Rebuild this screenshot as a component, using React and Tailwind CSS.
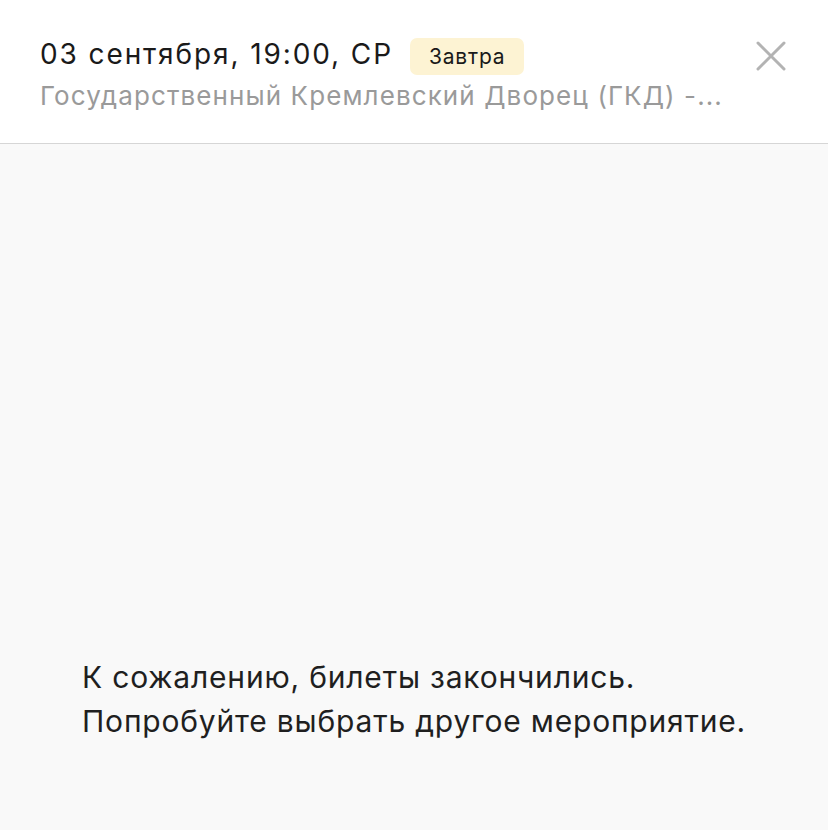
export default function App() {
  return (
    <div className="w-[828px] h-[830px] flex flex-col bg-[#f9f9f9]" style={{ fontFamily: "Inter, 'Noto Sans', sans-serif" }}>
      <div className="h-[144px] bg-white border-b border-[#d6d6d6] flex items-start justify-between pl-[40px] pr-[40px] pt-[33px]">
        <div className="flex flex-col min-w-0">
          <div className="flex items-center gap-[17px]">
            <span className="text-[28px] leading-[38px] text-[#1a1a1a] tracking-[1.9px]">03 сентября, 19:00, СР</span>
            <span className="mt-[5px] bg-[#fdf3d3] rounded-[7px] px-[19px] h-[37px] flex items-center text-[21px] text-[#1a1a1a] tracking-[0.8px]">Завтра</span>
          </div>
          <div className="mt-[4px] whitespace-nowrap text-[26px] leading-[34px] text-[#9a9a9a] tracking-[1.1px]">
            Государственный Кремлевский Дворец (ГКД) -...
          </div>
        </div>
        <svg width="32" height="32" viewBox="0 0 32 32" className="mt-[7px] mr-[1px]">
          <path d="M3 3 L29 29 M29 3 L3 29" stroke="#b3b3b3" strokeWidth="3" strokeLinecap="round" />
        </svg>
      </div>
      <div className="flex-1 flex flex-col justify-end pb-[87px] pl-[82px]">
        <p className="text-[30px] leading-[44px] text-[#1f1f1f] tracking-[0.8px]">
          К сожалению, билеты закончились.
          <br />
          Попробуйте выбрать другое мероприятие.
        </p>
      </div>
    </div>
  );
}
